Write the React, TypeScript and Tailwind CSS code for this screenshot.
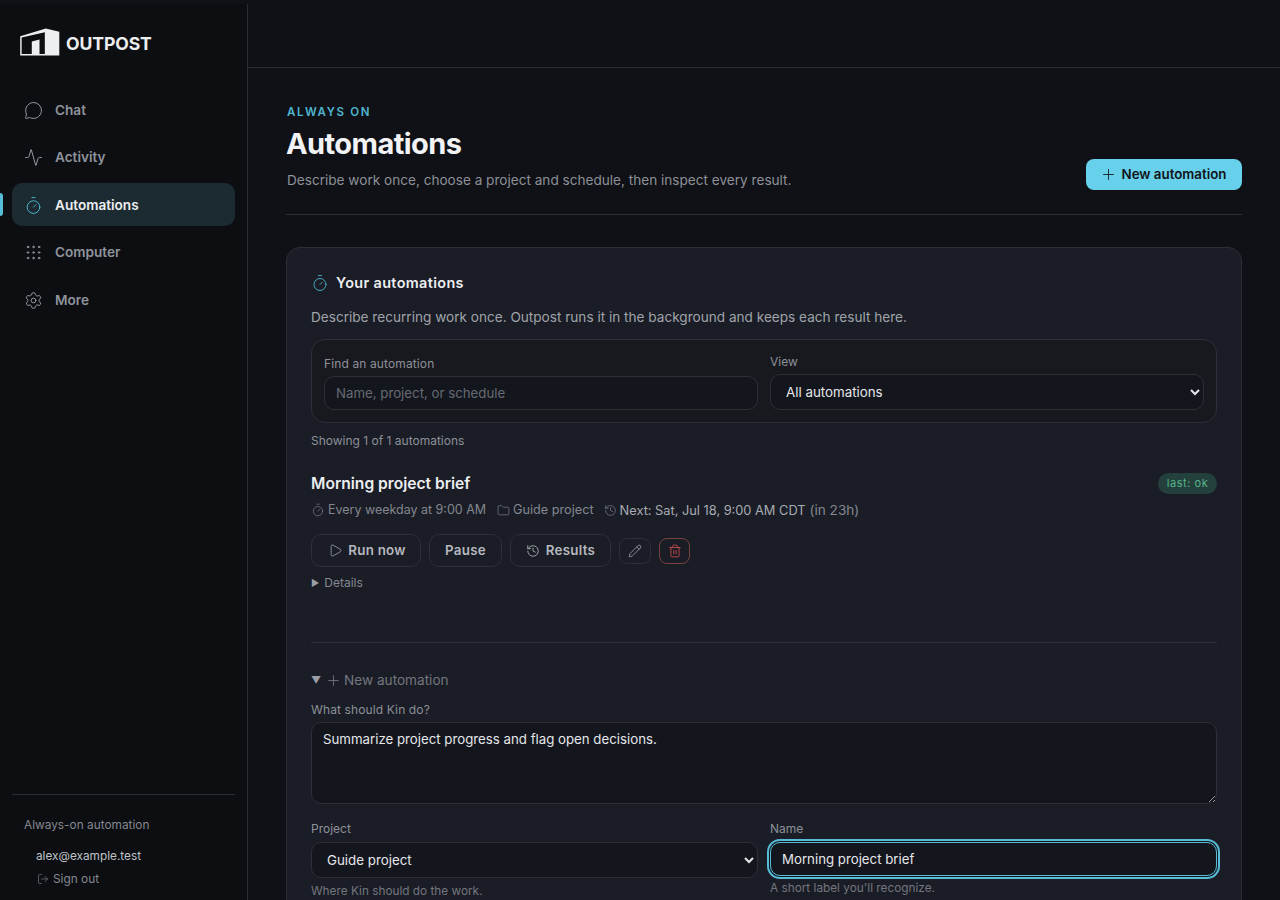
import {
  Activity,
  Folder,
  Grip,
  History,
  LogOut,
  MessageCircle,
  Pencil,
  Play,
  Plus,
  Settings,
  Timer,
  Trash2,
} from 'lucide-react'

const navItems = [
  { label: 'Chat', icon: MessageCircle },
  { label: 'Activity', icon: Activity },
  { label: 'Automations', icon: Timer, active: true },
  { label: 'Computer', icon: Grip },
  { label: 'More', icon: Settings },
]

function Logo() {
  return (
    <svg width="40" height="28" viewBox="0 0 41 29" className="shrink-0">
      <path
        fillRule="evenodd"
        fill="#eceef0"
        d="M0 8.5 L26.5 0.5 L40.5 4 V28.5 H0 Z M1.5 9.8 V27 H12 V14 L20 12 V27 H25.5 V4.5 Z"
      />
    </svg>
  )
}

function Sidebar() {
  return (
    <aside className="relative flex h-full w-[248px] shrink-0 flex-col pt-1">
      <div className="flex h-full flex-col border-r border-[#2a2d33] bg-[#0c0e12] px-3">
        <div className="flex items-center gap-[6px] pl-2 pt-6">
          <Logo />
          <span className="mt-[4px] text-[17.6px] leading-[24px] font-bold tracking-[-0.1px] text-[#eceef0]">
            OUTPOST
          </span>
        </div>
        <nav className="mt-[32px] flex flex-col gap-[4.5px]">
          {navItems.map(({ label, icon: Icon, active }) => (
            <div
              key={label}
              className={`flex h-[43px] items-center gap-[12px] rounded-[10px] pl-[12px] pt-px text-[13.6px] font-semibold ${
                active ? 'bg-[#1c2b32] text-[#eceef0]' : 'text-[#8f939c]'
              }`}
            >
              <Icon
                size={19}
                strokeWidth={1.2}
                className={active ? 'text-[#4fb6d0]' : 'text-[#9a9ea6]'}
              />
              {label}
            </div>
          ))}
        </nav>
        <div className="mt-auto border-t border-[#2a2d33] pb-[13px] pt-[22px]">
          <p className="pl-3 text-[11.85px] leading-4 text-[#84878f]">
            Always-on automation
          </p>
          <p className="mt-[15px] pl-6 text-[11.8px] leading-4 text-[#bfc2c8]">
            alex@example.test
          </p>
          <p className="mt-[7px] flex items-center gap-[4px] pl-[25px] text-[11.85px] leading-4 text-[#84878f]">
            <LogOut size={12} strokeWidth={1.25} />
            Sign out
          </p>
        </div>
      </div>
      <div className="absolute left-0 top-[193px] h-[23px] w-[3px] rounded-r bg-[#56bcd8]" />
    </aside>
  )
}

const fieldBox =
  'w-full rounded-[10px] border border-[#2c2f38] bg-[#14161e] text-[#e6e7ea] outline-none'

function PageHeader() {
  return (
    <div className="flex items-end justify-between border-b border-[#2a2d33] pb-6">
      <div>
        <p className="pl-px text-[11.5px] leading-4 font-semibold tracking-[0.145em] text-[#4fb6d0]">
          ALWAYS ON
        </p>
        <h1 className="mt-[6px] text-[29px] leading-9 font-bold tracking-[-0.02em] text-[#f2f3f5]">
          Automations
        </h1>
        <p className="mt-[8px] pl-px text-[13.6px] leading-5 text-[#8d9098]">
          Describe work once, choose a project and schedule, then inspect every
          result.
        </p>
      </div>
      <button className="flex h-[31px] w-[156px] items-center justify-center gap-[5px] rounded-lg bg-[#67d0ea] pr-[2px] text-[13.333px] font-semibold text-[#10141a]">
        <Plus size={17} strokeWidth={1.2} />
        New automation
      </button>
    </div>
  )
}

function Filters() {
  return (
    <div className="mt-[12px] grid h-[84px] grid-cols-2 gap-3 rounded-[14px] border border-[#2c2f38] bg-[#18191f] px-3">
      <label className="block pt-[16px]">
        <span className="block text-xs leading-4 tracking-[0.01em] text-[#8d9098]">
          Find an automation
        </span>
        <input
          readOnly
          placeholder="Name, project, or schedule"
          className={`${fieldBox} mt-[4px] h-[34px] px-[11px] text-[13.25px] placeholder:text-[#666a73]`}
        />
      </label>
      <label className="block pt-[14px]">
        <span className="block text-xs leading-4 text-[#8d9098]">View</span>
        <select
          className={`${fieldBox} mt-[4px] h-9 px-[11px] text-[13.333px]`}
          defaultValue="all"
        >
          <option value="all">All automations</option>
        </select>
      </label>
    </div>
  )
}

function AutomationRow() {
  const button =
    'flex h-[33px] items-center justify-center rounded-[10px] border border-[#2c2f38] text-[13.333px] font-semibold tracking-[0.02em] text-[#b5b8be]'
  return (
    <div className="mt-[25px]">
      <div className="flex items-start justify-between">
        <h3 className="text-[15.6px] leading-5 font-semibold text-[#eceef0]">
          Morning project brief
        </h3>
        <span className="mt-[-1px] flex h-[21px] w-[59px] items-center justify-center rounded-full bg-[#23403c] text-[11px] tracking-[0.05em] text-[#56b58c]">
          last: ok
        </span>
      </div>
      <div className="mt-[6px] flex h-[20px] items-center text-[12.6px] text-[#84878f]">
        <Timer size={14} strokeWidth={1.1} />
        <span className="ml-[3px] text-[12.48px]">
          Every weekday at 9:00 AM
        </span>
        <Folder size={13} strokeWidth={1.2} className="ml-[11px]" />
        <span className="ml-[3px] text-[12.7px]">Guide project</span>
        <History size={13} strokeWidth={1.2} className="ml-[10px]" />
        <span className="ml-[3px] mt-px text-[12.8px] text-[#a8abb2]">
          Next: Sat, Jul 18, 9:00 AM CDT
        </span>
        <span className="ml-[4px] mt-px text-[13.6px]">(in 23h)</span>
      </div>
      <div className="mt-[14px] flex items-center gap-2">
        <button className={`${button} w-[110px] gap-[5px] pl-[2px]`}>
          <Play size={15} strokeWidth={1.1} />
          Run now
        </button>
        <button className={`${button} w-[73px]`}>Pause</button>
        <button className={`${button} w-[101px] gap-[6px]`}>
          <History size={14} strokeWidth={1.4} />
          Results
        </button>
        <button className="flex h-[26px] w-[32px] items-center justify-center rounded-lg border border-[#2c2f38] text-[#b5b8be]">
          <Pencil size={14} strokeWidth={1.2} />
        </button>
        <button className="flex h-[26px] w-[31px] items-center justify-center rounded-lg border border-[#7a3f40] text-[#d0504f]">
          <Trash2 size={14} strokeWidth={1.4} />
        </button>
      </div>
      <p className="mt-[8px] flex items-center gap-[5px] text-xs leading-4 text-[#84878f]">
        <span className="text-[9px] text-[#9a9ea6]">▶</span>
        Details
      </p>
    </div>
  )
}

function NewAutomationForm() {
  return (
    <div>
      <p className="mt-[27px] flex h-5 items-center text-[13.6px] text-[#73767e]">
        <span className="mr-[4px] text-[10px] text-[#9a9ea6]">▼</span>
        <Plus size={17} strokeWidth={1.2} className="mr-[2px]" />
        New automation
      </p>
      <label className="mt-[12px] block">
        <span className="block text-xs leading-4 tracking-[0.01em] text-[#8d9098]">
          What should Kin do?
        </span>
        <textarea
          readOnly
          value="Summarize project progress and flag open decisions."
          className={`${fieldBox} mt-[4px] block h-[82px] px-[11px] py-[7px] text-[13.25px]`}
        />
      </label>
      <div className="mt-[17px] grid grid-cols-2 gap-3">
        <label className="block">
          <span className="block text-xs leading-4 text-[#8d9098]">
            Project
          </span>
          <select
            defaultValue="guide"
            className={`${fieldBox} mt-[5px] h-9 px-[11px] text-[13.333px]`}
          >
            <option value="guide">Guide project</option>
          </select>
          <span className="mt-[5px] block text-[11.8px] leading-4 text-[#73767e]">
            Where Kin should do the work.
          </span>
        </label>
        <label className="block">
          <span className="block text-xs leading-4 text-[#8d9098]">Name</span>
          <input
            readOnly
            value="Morning project brief"
            className={`${fieldBox} mt-[5px] h-[34px] !border-[#56bcd8] px-[11px] text-[13.25px] shadow-[0_0_0_1px_#14161e,0_0_0_3px_#56bcd8]`}
          />
          <span className="mt-[4px] block text-[11.8px] leading-4 text-[#73767e]">
            A short label you'll recognize.
          </span>
        </label>
      </div>
    </div>
  )
}

export default function App() {
  return (
    <div className="flex h-screen overflow-hidden bg-[#0f1116] font-['Inter',sans-serif]">
      <Sidebar />
      <main className="min-w-0 flex-1">
        <div className="h-[68px] border-b border-[#2a2d33]" />
        <div className="pl-[38px] pr-[38px] pt-[36px]">
          <PageHeader />
          <section className="mt-[32px] rounded-[14px] border border-[#2c2f38] bg-[#1a1d26] px-6 pb-8 pt-[25px]">
            <h2 className="flex h-5 items-center gap-[7px] text-[14.4px] font-semibold tracking-[0.025em] text-[#eceef0]">
              <Timer size={18} strokeWidth={1.2} className="text-[#4fb6d0]" />
              Your automations
            </h2>
            <p className="mt-[14px] text-[13.6px] leading-5 text-[#a0a3aa]">
              Describe recurring work once. Outpost runs it in the background
              and keeps each result here.
            </p>
            <Filters />
            <p className="mt-[10px] text-xs leading-4 text-[#8d9098]">
              Showing 1 of 1 automations
            </p>
            <AutomationRow />
            <div className="mt-[51px] border-t border-[#2c2f38]" />
            <NewAutomationForm />
          </section>
        </div>
      </main>
    </div>
  )
}
